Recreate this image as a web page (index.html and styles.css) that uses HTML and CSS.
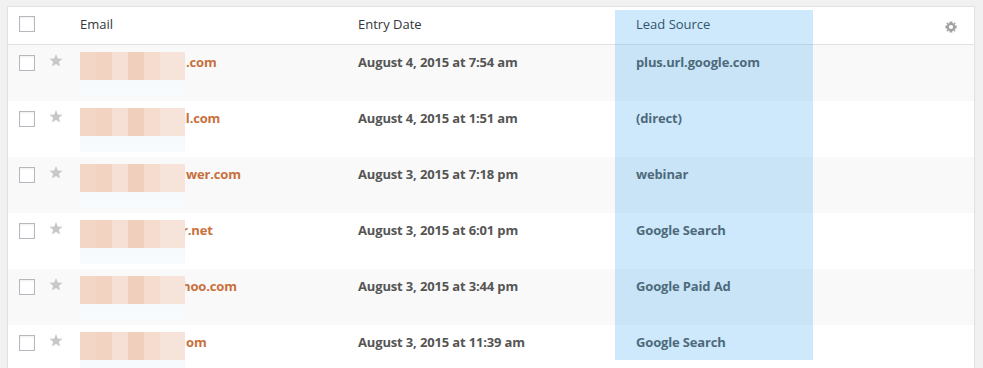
FILE: index.html
```html
<!DOCTYPE html>
<html lang="en">
<head>
<meta charset="utf-8">
<title>Entries</title>
<link rel="stylesheet" href="styles.css">
</head>
<body>
<div class="wrap">
  <div class="table">
    <div class="row head">
      <div class="cell cb"><span class="box"></span></div>
      <div class="cell star"></div>
      <div class="cell">Email</div>
      <div class="cell">Entry Date</div>
      <div class="cell">Lead Source</div>
      <div class="cell gear">
        <svg width="14" height="14" viewBox="0 0 20 20"><path fill="#a3a3a3" d="M18 12h-2.18a6 6 0 0 1-.7 1.7l1.54 1.54-1.42 1.42-1.54-1.54a6 6 0 0 1-1.7.7V18H8v-2.18a6 6 0 0 1-1.7-.7l-1.54 1.54-1.420-1.42 1.54-1.54A6 6 0 0 1 4.180 12H2V8h2.18a6 6 0 0 1 .7-1.7L3.34 4.76l1.42-1.42L6.3 4.88A6 6 0 0 1 8 4.18V2h4v2.18a6 6 0 0 1 1.7.7l1.54-1.54 1.42 1.42-1.54 1.54a6 6 0 0 1 .7 1.7H18v4zM10 13a3 3 0 1 0 0-6 3 3 0 0 0 0 6z"/></svg>
      </div>
    </div>
    <div class="row alt">
      <div class="cell cb"><span class="box"></span></div>
      <div class="cell star"><svg class="staricon" width="14" height="13" viewBox="0 0 20 19"><path d="M10 0l2.6 6.6 7.1.4-5.5 4.5 1.8 6.9L10 14.5l-6 3.9 1.8-6.9L.3 7l7.1-.4z"/></svg></div>
      <div class="cell email"><span class="redact"></span><a class="link">.com</a></div>
      <div class="cell date">August 4, 2015 at 7:54 am</div>
      <div class="cell src">plus.url.google.com</div>
      <div class="cell"></div>
    </div>
    <div class="row">
      <div class="cell cb"><span class="box"></span></div>
      <div class="cell star"><svg class="staricon" width="14" height="13" viewBox="0 0 20 19"><path d="M10 0l2.6 6.6 7.1.4-5.5 4.5 1.8 6.9L10 14.5l-6 3.9 1.8-6.9L.3 7l7.1-.4z"/></svg></div>
      <div class="cell email"><span class="redact"></span><a class="link tuck">il.com</a></div>
      <div class="cell date">August 4, 2015 at 1:51 am</div>
      <div class="cell src">(direct)</div>
      <div class="cell"></div>
    </div>
    <div class="row alt">
      <div class="cell cb"><span class="box"></span></div>
      <div class="cell star"><svg class="staricon" width="14" height="13" viewBox="0 0 20 19"><path d="M10 0l2.6 6.6 7.1.4-5.5 4.5 1.8 6.9L10 14.5l-6 3.9 1.8-6.9L.3 7l7.1-.4z"/></svg></div>
      <div class="cell email"><span class="redact"></span><a class="link">wer.com</a></div>
      <div class="cell date">August 3, 2015 at 7:18 pm</div>
      <div class="cell src">webinar</div>
      <div class="cell"></div>
    </div>
    <div class="row">
      <div class="cell cb"><span class="box"></span></div>
      <div class="cell star"><svg class="staricon" width="14" height="13" viewBox="0 0 20 19"><path d="M10 0l2.6 6.6 7.1.4-5.5 4.5 1.8 6.9L10 14.5l-6 3.9 1.8-6.9L.3 7l7.1-.4z"/></svg></div>
      <div class="cell email"><span class="redact"></span><a class="link tuck">r.net</a></div>
      <div class="cell date">August 3, 2015 at 6:01 pm</div>
      <div class="cell src">Google Search</div>
      <div class="cell"></div>
    </div>
    <div class="row alt">
      <div class="cell cb"><span class="box"></span></div>
      <div class="cell star"><svg class="staricon" width="14" height="13" viewBox="0 0 20 19"><path d="M10 0l2.6 6.6 7.1.4-5.5 4.5 1.8 6.9L10 14.5l-6 3.9 1.8-6.9L.3 7l7.1-.4z"/></svg></div>
      <div class="cell email"><span class="redact"></span><a class="link tuck">hoo.com</a></div>
      <div class="cell date">August 3, 2015 at 3:44 pm</div>
      <div class="cell src">Google Paid Ad</div>
      <div class="cell"></div>
    </div>
    <div class="row">
      <div class="cell cb"><span class="box"></span></div>
      <div class="cell star"><svg class="staricon" width="14" height="13" viewBox="0 0 20 19"><path d="M10 0l2.6 6.6 7.1.4-5.5 4.5 1.8 6.9L10 14.5l-6 3.9 1.8-6.9L.3 7l7.1-.4z"/></svg></div>
      <div class="cell email"><span class="redact"></span><a class="link">om</a></div>
      <div class="cell date">August 3, 2015 at 11:39 am</div>
      <div class="cell src">Google Search</div>
      <div class="cell"></div>
    </div>
  </div>
  <div class="highlight"></div>
</div>
</body>
</html>
```
FILE: styles.css
```css
html, body {
  margin: 0;
  background: #f1f1f1;
}
body {
  padding: 6px 8px 0 7px;
  font-family: "Open Sans", "Liberation Sans", sans-serif;
  font-size: 13px;
  line-height: 19px;
  color: #32373c;
}
.wrap {
  position: relative;
  width: 968px;
}
.table {
  background: #fff;
  border: 1px solid #e1e1e1;
  box-shadow: 0 1px 1px rgba(0,0,0,0.04);
}
.row {
  display: grid;
  grid-template-columns: 32px 30px 278px 278px 304px 44px;
  height: 56px;
}
.row.alt {
  background: #f9f9f9;
}
.row.head {
  height: 37px;
  border-bottom: 1px solid #e1e1e1;
}
.cell {
  padding: 8px 10px 0 10px;
  white-space: nowrap;
  overflow: hidden;
}
.head .cell {
  padding-top: 8px;
}
.cell.cb {
  padding: 10px 0 0 11px;
}
.head .cell.cb {
  padding-top: 9px;
}
.box {
  display: block;
  width: 14px;
  height: 14px;
  border: 1px solid #b4b9be;
  background: #fff;
  box-shadow: inset 0 1px 2px rgba(0,0,0,0.07);
}
.cell.star {
  padding: 9px 0 0 9px;
}
.staricon {
  display: block;
  fill: #c8c8c8;
}
.cell.gear {
  padding: 13px 0 0 14px;
}
.gear svg {
  display: block;
}
.email {
  display: flex;
  align-items: flex-start;
  overflow: visible;
}
.redact {
  flex: none;
  display: block;
  width: 105px;
  height: 44px;
  margin-top: -1px;
  position: relative;
  z-index: 1;
  background:
    linear-gradient(to bottom, transparent 0, transparent 28px, #f6f9fc 28px, #f8fbfd 44px),
    linear-gradient(to right,
      #f4d6c7 0, #f4d6c7 16px,
      #f2d3c2 16px, #f2d3c2 32px,
      #f6e0d5 32px, #f6e0d5 48px,
      #f1cfbd 48px, #f1cfbd 64px,
      #f5dccf 64px, #f5dccf 80px,
      #f6e3da 80px, #f6e3da 105px);
}
.link {
  color: #c8703c;
  font-weight: 700;
  text-decoration: none;
  margin-left: 1px;
  letter-spacing: -0.15px;
}
.link.tuck {
  margin-left: -3px;
}
.date,
.src {
  color: #555;
  font-weight: 700;
  letter-spacing: -0.15px;
}
.highlight {
  position: absolute;
  left: 608px;
  top: 4px;
  width: 198px;
  height: 350px;
  background: rgba(55, 167, 239, 0.25);
  pointer-events: none;
}
```
